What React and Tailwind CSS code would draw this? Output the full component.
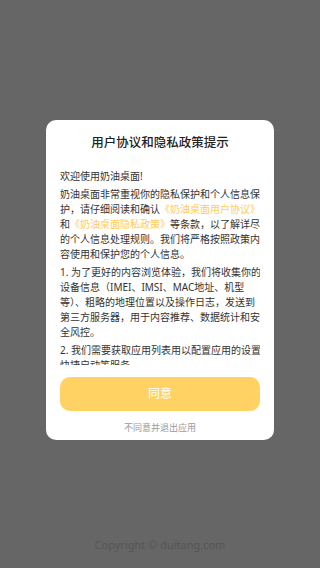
import React from "react";

const Link = ({ children }) => <span className="text-[#ffcb5e]">{children}</span>;

const App = () => {
  return (
    <div
      className="min-h-[568px] w-[320px] bg-[#666666] flex flex-col items-center"
      style={{ fontFamily: '"Noto Sans", "Noto Sans CJK SC", sans-serif' }}
    >
      {/* Dialog */}
      <div className="mt-[120px] w-[228px] h-[320px] bg-white rounded-[10px] px-[14px] flex flex-col">
        <h1 className="pt-[14px] text-center text-[12.5px] leading-[18px] font-medium text-[#222]">
          用户协议和隐私政策提示
        </h1>

        {/* Scroll area */}
        <div className="mt-[17px] h-[196px] overflow-hidden text-[10px] leading-[15px] text-[#333] flex flex-col gap-[3px]">
          <p>欢迎使用奶油桌面!</p>
          <p>
            <span className="block whitespace-nowrap">奶油桌面非常重视你的隐私保护和个人信息保</span>
            <span className="block whitespace-nowrap">
              护，请仔细阅读和确认<Link>《奶油桌面用户协议》</Link>
            </span>
            <span className="block whitespace-nowrap">
              和<Link>《奶油桌面隐私政策》</Link>等条款，以了解详尽
            </span>
            <span className="block whitespace-nowrap">的个人信息处理规则。我们将严格按照政策内</span>
            <span className="block whitespace-nowrap">容使用和保护您的个人信息。</span>
          </p>
          <p>
            <span className="block whitespace-nowrap">1. 为了更好的内容浏览体验，我们将收集你的</span>
            <span className="block whitespace-nowrap">设备信息（IMEI、IMSI、MAC地址、机型</span>
            <span className="block whitespace-nowrap">等）、粗略的地理位置以及操作日志，发送到</span>
            <span className="block whitespace-nowrap">第三方服务器，用于内容推荐、数据统计和安</span>
            <span className="block whitespace-nowrap">全风控。</span>
          </p>
          <p>
            <span className="block whitespace-nowrap">2. 我们需要获取应用列表用以配置应用的设置</span>
            <span className="block whitespace-nowrap">快捷启动等服务。</span>
          </p>
        </div>

        {/* Buttons */}
        <button className="mt-[12px] h-[34px] w-full rounded-[10px] bg-[#ffd263] text-white text-[12px]">
          同意
        </button>
        <button className="mt-[10px] text-center text-[9px] leading-[14px] text-[#9a9a9a]">
          不同意并退出应用
        </button>
      </div>

      <div className="mt-auto mb-[16px] text-[11px] leading-[14px] text-[#555555]">
        Copyright © duitang.com
      </div>
    </div>
  );
};

export default App;
